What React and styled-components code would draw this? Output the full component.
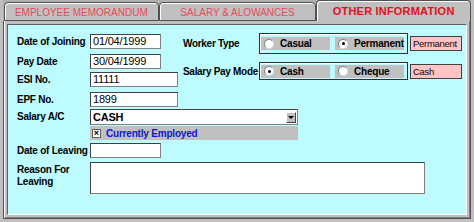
import React from "react";
import styled, { createGlobalStyle } from "styled-components";

const GlobalStyle = createGlobalStyle`
  html, body { margin: 0; padding: 0; background: #c0c0c0; }
  body { font-family: "Liberation Sans", Arial, sans-serif; }
`;

const Window = styled.div`
  width: 474px;
  height: 222px;
  background: #c0c0c0;
  box-sizing: border-box;
  padding: 0 3px 3px 3px;
  display: flex;
  flex-direction: column;
`;

const TabStrip = styled.div`
  display: flex;
  align-items: flex-end;
  height: 21px;
  padding-left: 1px;
  background: #b0b0b0;
`;

const Tab = styled.div`
  box-sizing: border-box;
  width: ${(p) => p.w}px;
  height: ${(p) => (p.active ? 21 : 19)}px;
  display: flex;
  align-items: center;
  justify-content: center;
  background: #c0c0c0;
  border: 1px solid #505050;
  border-bottom: ${(p) => (p.active ? "none" : "1px solid #505050")};
  border-radius: 4px 4px 0 0;
  box-shadow: inset 1px 1px 0 #ffffff;
  color: ${(p) => (p.active ? "#e0101c" : "#e84a5a")};
  font-size: ${(p) => (p.active ? "11px" : "10px")};
  font-weight: ${(p) => (p.active ? "bold" : "normal")};
  letter-spacing: ${(p) => (p.active ? "0.2px" : "0")};
  text-transform: uppercase;
  padding-top: ${(p) => (p.active ? "0" : "1px")};
`;

const TabBody = styled.div`
  flex: 1;
  box-sizing: border-box;
  border: 1px solid #505050;
  border-top: none;
  box-shadow: inset 1px 0 0 #ffffff, inset -1px -1px 0 #808080;
  padding: 3px;
  display: flex;
`;

const Panel = styled.div`
  flex: 1;
  box-sizing: border-box;
  background: #bdfbff;
  border-top: 1px solid #606060;
  border-left: 1px solid #606060;
  border-right: 1px solid #ffffff;
  border-bottom: 1px solid #ffffff;
  padding: 9px 0 0 9px;
  display: flex;
  flex-direction: column;
`;

const TopSection = styled.div`
  display: flex;
`;

const Fields = styled.div`
  display: grid;
  grid-template-columns: 73px auto;
  grid-template-rows: ${(p) => p.rows};
  align-items: start;
`;

const Label = styled.div`
  font-size: 10px;
  font-weight: bold;
  letter-spacing: -0.25px;
  color: #000;
  line-height: 12px;
  padding-top: 2px;
  white-space: ${(p) => (p.wrap ? "normal" : "nowrap")};
  width: ${(p) => (p.wrap ? "60px" : "auto")};
`;

const TextBox = styled.div`
  box-sizing: border-box;
  width: ${(p) => p.w}px;
  height: ${(p) => p.h || 15}px;
  background: #ffffff;
  border-top: 1px solid #404040;
  border-left: 1px solid #404040;
  border-right: 1px solid #808080;
  border-bottom: 1px solid #808080;
  font-size: 11px;
  line-height: 13px;
  letter-spacing: -0.2px;
  color: #000;
  padding-left: 2px;
`;

const RightBlock = styled.div`
  margin-left: 5px;
  margin-top: -1px;
  display: flex;
  flex-direction: column;
  gap: 8px;
`;

const OptionRow = styled.div`
  display: flex;
  align-items: center;
`;

const OptionLabel = styled.div`
  width: 76px;
  font-size: 10px;
  font-weight: bold;
  letter-spacing: -0.3px;
  white-space: nowrap;
`;

const GroupBox = styled.div`
  box-sizing: border-box;
  width: 149px;
  height: ${(p) => p.h}px;
  border: 1px solid #303030;
  box-shadow: inset 1px 1px 0 #ffffff;
  display: flex;
  align-items: center;
  gap: 5px;
  padding-left: 1px;
`;

const RadioButton = styled.div`
  width: 69px;
  height: 13px;
  background: #c0c0c0;
  display: flex;
  align-items: center;
  gap: 6px;
  padding-left: 3px;
  box-sizing: border-box;
  font-size: 10px;
  font-weight: bold;
  letter-spacing: -0.2px;
  white-space: nowrap;
`;

const RadioCircle = styled.span`
  box-sizing: border-box;
  flex: none;
  width: 10px;
  height: 10px;
  border-radius: 50%;
  background: #ffffff;
  border: 1px solid #808080;
  border-right-color: #e0e0e0;
  border-bottom-color: #e0e0e0;
  display: flex;
  align-items: center;
  justify-content: center;
  &::after {
    content: "";
    width: 3px;
    height: 3px;
    border-radius: 50%;
    background: ${(p) => (p.checked ? "#000" : "transparent")};
  }
`;

const ValueTag = styled.div`
  box-sizing: border-box;
  margin-left: 2px;
  width: 52px;
  height: 15px;
  background: #ffc4c4;
  border: 1px solid #404040;
  font-size: 9.5px;
  letter-spacing: -0.3px;
  line-height: 13px;
  padding-left: 2px;
  color: #200000;
  overflow: hidden;
  white-space: nowrap;
`;

const Select = styled(TextBox)`
  display: flex;
  align-items: center;
  justify-content: space-between;
  font-weight: bold;
  padding-right: 1px;
`;

const DropButton = styled.span`
  box-sizing: border-box;
  width: 10px;
  height: 11px;
  background: #c0c0c0;
  border: 1px solid #ffffff;
  border-right-color: #404040;
  border-bottom-color: #404040;
  display: flex;
  align-items: center;
  justify-content: center;
  &::after {
    content: "";
    border-left: 3px solid transparent;
    border-right: 3px solid transparent;
    border-top: 3px solid #000;
  }
`;

const CheckBar = styled.div`
  box-sizing: border-box;
  width: 208px;
  height: 14px;
  background: #c0c0c0;
  display: flex;
  align-items: center;
  gap: 5px;
  padding-left: 2px;
`;

const CheckBox = styled.span`
  box-sizing: border-box;
  width: 9px;
  height: 9px;
  background: #ffffff;
  border: 1px solid #606060;
  font-size: 9px;
  line-height: 7px;
  font-weight: bold;
  text-align: center;
  color: #000;
`;

const CheckText = styled.span`
  color: #1010e8;
  font-size: 10px;
  font-weight: bold;
  letter-spacing: -0.2px;
`;

export default function App() {
  return (
    <>
      <GlobalStyle />
      <Window>
        <TabStrip>
          <Tab w={155}>Employee Memorandum</Tab>
          <Tab w={158}>Salary &amp; Alowances</Tab>
          <Tab w={155} active>
            Other Information
          </Tab>
        </TabStrip>
        <TabBody>
          <Panel>
            <TopSection>
              <Fields rows="20px 18px 20px 17px">
                <Label>Date of Joining</Label>
                <TextBox w={71}>01/04/1999</TextBox>
                <Label>Pay Date</Label>
                <TextBox w={71}>30/04/1999</TextBox>
                <Label>ESI No.</Label>
                <TextBox w={88}>11111</TextBox>
                <Label>EPF No.</Label>
                <TextBox w={88}>1899</TextBox>
              </Fields>
              <RightBlock>
                <OptionRow>
                  <OptionLabel>Worker Type</OptionLabel>
                  <GroupBox h={21}>
                    <RadioButton>
                      <RadioCircle />
                      Casual
                    </RadioButton>
                    <RadioButton>
                      <RadioCircle checked />
                      Permanent
                    </RadioButton>
                  </GroupBox>
                  <ValueTag>Permanent</ValueTag>
                </OptionRow>
                <OptionRow>
                  <OptionLabel>Salary Pay Mode</OptionLabel>
                  <GroupBox h={18}>
                    <RadioButton>
                      <RadioCircle checked />
                      Cash
                    </RadioButton>
                    <RadioButton>
                      <RadioCircle />
                      Cheque
                    </RadioButton>
                  </GroupBox>
                  <ValueTag>Cash</ValueTag>
                </OptionRow>
              </RightBlock>
            </TopSection>
            <Fields rows="17px 17px 19px 32px">
              <Label>Salary A/C</Label>
              <Select w={208} h={16}>
                CASH
                <DropButton />
              </Select>
              <span />
              <CheckBar>
                <CheckBox>×</CheckBox>
                <CheckText>Currently Employed</CheckText>
              </CheckBar>
              <Label>Date of Leaving</Label>
              <TextBox w={71}></TextBox>
              <Label wrap>Reason For Leaving</Label>
              <TextBox w={335} h={32}></TextBox>
            </Fields>
          </Panel>
        </TabBody>
      </Window>
    </>
  );
}
